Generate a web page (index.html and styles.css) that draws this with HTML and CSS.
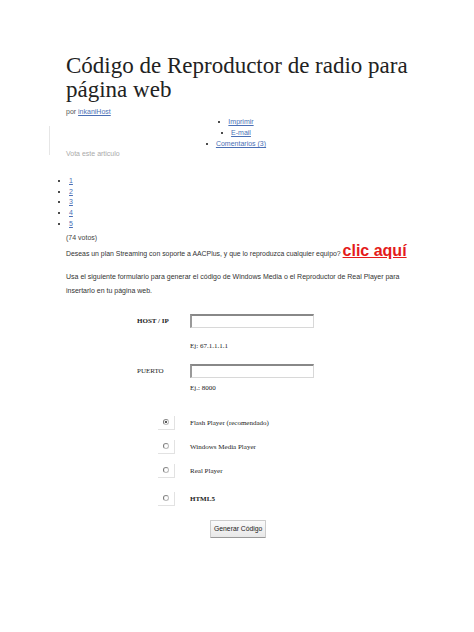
FILE: index.html
```html
<!DOCTYPE html>
<html lang="es">
<head>
    <meta charset="UTF-8">
    <meta name="viewport" content="width=device-width, initial-scale=1.0">
    <title>Código de Reproductor de radio para página web</title>
    <link rel="stylesheet" href="styles.css">
</head>
<body>

<div class="page">
    <h1 class="title">Código de Reproductor de radio para página web</h1>
    <div class="byline">por <a href="#">inkaniHost</a></div>

    <div class="tools">
        <ul>
            <li><a href="#">Imprimir</a></li>
            <li><a href="#">E-mail</a></li>
            <li><a href="#">Comentarios (3)</a></li>
        </ul>
    </div>

    <div class="vote-label">Vota este articulo</div>

    <ul class="stars">
        <li><a href="#">1</a></li>
        <li><a href="#">2</a></li>
        <li><a href="#">3</a></li>
        <li><a href="#">4</a></li>
        <li><a href="#">5</a></li>
    </ul>
    <div class="votes">(74 votos)</div>

    <p class="promo">Deseas un plan Streaming con soporte a AACPlus, y que lo reproduzca cualquier equipo? <a href="#">clic aquí</a></p>

    <p class="intro">Usa el siguiente formulario para generar el código de Windows Media o el Reproductor de Real Player para insertarlo en tu página web.</p>

    <form class="gen-form" onsubmit="return false">
        <div class="row">
            <label class="label bold">HOST / IP</label>
            <input type="text" class="field">
        </div>
        <div class="row hint-row">
            <span class="value">Ej: 67.1.1.1.1</span>
        </div>
        <div class="row port-row">
            <label class="label">PUERTO</label>
            <input type="text" class="field">
        </div>
        <div class="row hint-row tight">
            <span class="value">Ej.: 8000</span>
        </div>

        <div class="row radio-row first">
            <span class="radio-cell"><span class="radio checked"></span></span>
            <span class="value">Flash Player (recomendado)</span>
        </div>
        <div class="row radio-row">
            <span class="radio-cell"><span class="radio"></span></span>
            <span class="value">Windows Media Player</span>
        </div>
        <div class="row radio-row">
            <span class="radio-cell"><span class="radio"></span></span>
            <span class="value">Real Player</span>
        </div>
        <div class="row radio-row wide">
            <span class="radio-cell"><span class="radio"></span></span>
            <span class="value bold">HTML5</span>
        </div>

        <div class="submit-row">
            <button type="submit">Generar Código</button>
        </div>
    </form>
</div>

</body>
</html>
```

FILE: styles.css
```css
body {
    margin: 0;
    background-color: #fff;
    font-family: 'Liberation Sans', Arial, sans-serif;
    color: #333;
}

a {
    color: #4a6fb5;
}

.page {
    width: 340px;
    padding: 54px 0 0 66px;
}

/* Heading */
.title {
    width: 350px;
    margin: 0;
    font-family: 'Liberation Serif', 'Times New Roman', serif;
    font-weight: normal;
    font-size: 23px;
    line-height: 24px;
    color: #222;
}

.byline {
    margin-top: 5px;
    font-size: 7px;
    line-height: 9px;
    color: #555;
}

/* Print / mail links */
.tools {
    position: relative;
    margin: 0 0 0 -17px;
    padding: 0 0 0 17px;
}

.tools::before {
    content: "";
    position: absolute;
    left: 0;
    top: 10px;
    bottom: -6px;
    border-left: 1px solid #e6e6e6;
}

.tools ul {
    margin: 0;
    padding: 0;
    list-style-position: inside;
    text-align: center;
    font-size: 7px;
    line-height: 11px;
    color: #111;
}

.vote-label {
    margin-top: 0;
    font-size: 7px;
    line-height: 9px;
    color: #aaa;
}

/* Rating */
.stars {
    margin: 18px 0 0 0;
    padding-left: 3px;
    font-size: 7px;
    line-height: 10.7px;
    color: #111;
}

.votes {
    margin-top: 3px;
    font-size: 7px;
    line-height: 9px;
    color: #444;
}

.promo {
    margin: 1px 0 0 0;
    white-space: nowrap;
    font-size: 6.9px;
    line-height: 16px;
}

.promo a {
    color: #e41b1b;
    font-size: 16px;
    font-weight: bold;
}

.intro {
    margin: 8px 0 0 0;
    font-size: 7px;
    line-height: 14px;
}

/* Generator form */
.gen-form {
    margin: 16px 0 0 71px;
    font-family: 'Liberation Serif', 'Times New Roman', serif;
    font-size: 7px;
    color: #222;
}

.row {
    display: flex;
    align-items: center;
    height: 14px;
}

.hint-row,
.port-row {
    margin-top: 11px;
}

.hint-row.tight {
    margin-top: 3px;
}

.radio-row {
    margin-top: 10px;
}

.radio-row.first {
    margin-top: 21px;
}

.radio-row.wide {
    margin-top: 14px;
}

.label {
    width: 53px;
    color: #222;
}

.bold {
    font-weight: bold;
}

.hint-row .value {
    margin-left: 53px;
}

.field {
    box-sizing: border-box;
    width: 124px;
    height: 14px;
    margin: 0;
    padding: 0;
    border: 1px solid #d8d8d8;
    border-top: 2px solid #888;
    border-left: 2px solid #999;
    background: #fff;
}

.radio-cell {
    box-sizing: border-box;
    display: flex;
    align-items: center;
    justify-content: center;
    width: 17px;
    height: 14px;
    margin: 0 15px 0 21px;
    border-right: 1px solid #e2e2e2;
    border-bottom: 1px solid #e2e2e2;
}

.radio {
    box-sizing: border-box;
    position: relative;
    width: 6px;
    height: 6px;
    border: 1px solid #bbb;
    border-left-color: #777;
    border-top-color: #888;
    border-radius: 50%;
}

.radio.checked::after {
    content: "";
    position: absolute;
    left: 1px;
    top: 1px;
    width: 2px;
    height: 2px;
    border-radius: 50%;
    background: #222;
}

.submit-row {
    margin: 14px 0 0 73px;
}

button {
    height: 18px;
    padding: 0 3px;
    font-family: 'Liberation Sans', Arial, sans-serif;
    font-size: 6.8px;
    color: #222;
    background: linear-gradient(#fafafa, #e8e8e8);
    border: 1px solid #ccc;
    border-bottom-color: #999;
    border-radius: 1px;
}
```
